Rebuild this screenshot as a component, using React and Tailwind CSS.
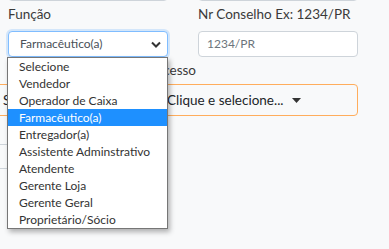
import React from 'react';

const options = [
  'Selecione',
  'Vendedor',
  'Operador de Caixa',
  'Farmacêutico(a)',
  'Entregador(a)',
  'Assistente Adminstrativo',
  'Atendente',
  'Gerente Loja',
  'Gerente Geral',
  'Proprietário/Sócio',
];

const App = () => {
  const selected = 'Farmacêutico(a)';

  return (
    <div
      className="relative w-[389px] h-[249px] overflow-hidden bg-[#f8f9fa] text-[#212529]"
      style={{ fontFamily: 'Lato, "Open Sans", sans-serif' }}
    >
      {/* previous row inputs, cut off at the top */}
      <div className="flex gap-[30px] pl-[8px] -mt-[25px]">
        <div className="w-[160px] h-[26px] bg-white border border-[#ced4da] rounded" />
        <div className="w-[160px] h-[26px] bg-white border border-[#ced4da] rounded" />
      </div>

      {/* Função / Conselho row */}
      <div className="flex gap-[30px] pl-[8px] mt-[3px]">
        <div className="w-[160px]">
          <label className="block text-[13.5px] leading-[20px] text-[#3a3a3a]">Função</label>
          <div className="mt-[7px] h-[26px] bg-white border border-[#80bdff] rounded shadow-[0_0_0_2px_rgba(0,123,255,0.15)] flex items-center justify-between pl-[11px] pr-[6px]">
            <span className="text-[12px] text-[#495057]">{selected}</span>
            <svg width="10" height="7" viewBox="0 0 10 7">
              <path d="M1 1.5 L5 5.5 L9 1.5" fill="none" stroke="#333" strokeWidth="2" />
            </svg>
          </div>
        </div>
        <div className="w-[160px]">
          <label className="block text-[13.5px] leading-[20px] text-[#3a3a3a] whitespace-nowrap">Nr Conselho Ex: 1234/PR</label>
          <div className="mt-[7px] h-[26px] bg-white border border-[#ced4da] rounded flex items-center pl-[8px]">
            <span className="text-[12px] text-[#6c757d]">1234/PR</span>
          </div>
        </div>
      </div>

      {/* access level row */}
      <div className="pl-[8px] mt-[3px]">
        <label className="block w-[188px] text-right text-[13.5px] leading-[20px] text-[#3a3a3a] whitespace-nowrap">Nível de Acesso</label>
        <div className="-ml-[20px] mt-[4px] w-[370px] h-[32px] border border-[#ffad5c] rounded flex items-center pl-[14px]">
          <span className="text-[13.5px] w-[164px]">Selecione</span>
          <span className="text-[13.5px] flex items-center gap-[8px]">
            Clique e selecione...
            <svg width="9" height="5" viewBox="0 0 9 5">
              <path d="M0 0 L9 0 L4.5 5 Z" fill="#333" />
            </svg>
          </span>
        </div>
        <div className="-ml-[20px] mt-[28px] w-[180px] h-[25px] border border-[#ced4da] rounded" />
      </div>

      {/* open select listbox */}
      <ul className="absolute left-[7px] top-[57px] w-[161px] bg-white border border-[#767676] shadow-[2px_3px_5px_rgba(0,0,0,0.3)] py-0">
        {options.map((opt) => (
          <li
            key={opt}
            className={`h-[17px] leading-[17px] pl-[11px] text-[12px] whitespace-nowrap ${
              opt === selected ? 'bg-[#1e90ff] text-white' : 'text-[#333]'
            }`}
          >
            {opt}
          </li>
        ))}
      </ul>
    </div>
  );
};

export default App;
